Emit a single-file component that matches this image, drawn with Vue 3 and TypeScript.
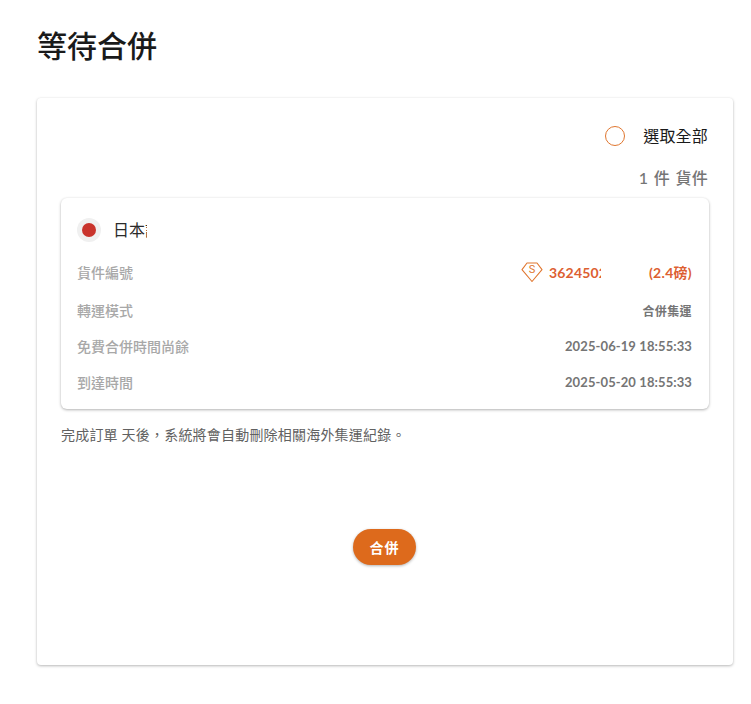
<script setup lang="ts">
const rows = [
  { label: '轉運模式', value: '合併集運', date: false },
  { label: '免費合併時間尚餘', value: '2025-06-19 18:55:33', date: true },
  { label: '到達時間', value: '2025-05-20 18:55:33', date: true },
]
</script>

<template>
  <div class="page">
    <h1 class="title">等待合併</h1>
    <section class="panel">
      <div class="select-all">
        <span class="radio"></span>
        <span class="select-label">選取全部</span>
      </div>
      <div class="count">1 件 貨件</div>
      <div class="parcel">
        <div class="origin">
          <span class="flag"><span class="flag-dot"></span></span>
          <span class="origin-name">日本語</span>
        </div>
        <div class="row first-row">
          <span class="label">貨件編號</span>
          <span class="parcel-id">
            <svg class="badge" viewBox="0 0 22 22" width="22" height="22" fill="none">
              <path d="M6 2h10l5 6.6L11 20.5 1 8.6z" stroke="#e0762f" stroke-width="1.1" stroke-linejoin="round" />
              <text x="11" y="9.5" text-anchor="middle" class="badge-s">S</text>
            </svg>
            <span class="id-text">3624502</span>
            <span class="weight">(2.4磅)</span>
          </span>
        </div>
        <div v-for="row in rows" :key="row.label" class="row">
          <span class="label">{{ row.label }}</span>
          <span class="value" :class="{ date: row.date }">{{ row.value }}</span>
        </div>
      </div>
      <p class="note">完成訂單 天後，系統將會自動刪除相關海外集運紀錄。</p>
      <div class="actions">
        <button class="merge" type="button">合併</button>
      </div>
    </section>
  </div>
</template>

<style>
html,
body {
  background: #fff;
}
</style>

<style scoped>
.page {
  box-sizing: border-box;
  height: 704px;
  padding: 26px 18px 0 37px;
  font-family: Lato, "Noto Sans CJK TC", sans-serif;
  overflow: hidden;
}

.title {
  margin: 0 0 32px;
  height: 40px;
  font-size: 30px;
  line-height: 39px;
  font-weight: 500;
  color: #1a1a1a;
}

.panel {
  box-sizing: border-box;
  height: 567px;
  padding: 27px 25px 0 24px;
  background: #fff;
  border-radius: 4px;
  box-shadow: 0 1px 3px rgba(0, 0, 0, 0.28), 0 0 2px rgba(0, 0, 0, 0.04);
}

.select-all {
  display: flex;
  justify-content: flex-end;
  align-items: center;
  height: 22px;
}

.radio {
  box-sizing: border-box;
  width: 20px;
  height: 20px;
  border: 1px solid #e0762f;
  border-radius: 50%;
  margin-right: 18px;
}

.select-label {
  font-size: 16px;
  line-height: 22px;
  letter-spacing: 0.2px;
  color: #1a1a1a;
}

.count {
  margin-top: 21px;
  height: 20px;
  line-height: 20px;
  text-align: right;
  font-size: 16px;
  font-weight: 500;
  letter-spacing: 0.3px;
  word-spacing: 1px;
  color: #757575;
}

.parcel {
  box-sizing: border-box;
  height: 211px;
  margin: 10px -1px 0 0;
  padding: 20px 17px 0 16px;
  border-radius: 6px;
  box-shadow: 0 1px 3px rgba(0, 0, 0, 0.3), 0 0 2px rgba(0, 0, 0, 0.04);
}

.origin {
  display: flex;
  align-items: center;
  height: 24px;
  margin-bottom: 10px;
}

.flag {
  display: flex;
  align-items: center;
  justify-content: center;
  width: 24px;
  height: 24px;
  border-radius: 50%;
  background: #f0f0f0;
  margin-right: 12px;
}

.flag-dot {
  width: 14px;
  height: 14px;
  border-radius: 50%;
  background: #c9342c;
}

.origin-name {
  width: 34px;
  overflow: hidden;
  white-space: nowrap;
  font-size: 16px;
  line-height: 24px;
  color: #2a2a2a;
}

.row {
  display: flex;
  justify-content: space-between;
  align-items: center;
  height: 36px;
}

.first-row {
  height: 40px;
}

.label {
  font-size: 14px;
  font-weight: 500;
  color: #a8a8a8;
}

.value {
  font-size: 12px;
  font-weight: 700;
  letter-spacing: 0.4px;
  color: #757575;
}

.value.date {
  font-size: 13px;
  letter-spacing: 0.1px;
}

.parcel-id {
  display: flex;
  align-items: center;
  color: #dd5f32;
  font-size: 14px;
  font-weight: 700;
}

.badge {
  margin-right: 6px;
}

.badge-s {
  font-family: Roboto, sans-serif;
  font-size: 11px;
  font-weight: 400;
  fill: #e0762f;
  dominant-baseline: middle;
}

.id-text {
  width: 52px;
  overflow: hidden;
  white-space: nowrap;
  letter-spacing: 0.2px;
  margin-right: 48px;
}

.weight {
  letter-spacing: 0.3px;
}

.note {
  margin: 16px 0 0;
  font-size: 14px;
  line-height: 20px;
  letter-spacing: 0.2px;
  color: #616161;
}

.actions {
  display: flex;
  justify-content: center;
  margin-top: 84px;
}

.merge {
  width: 63px;
  height: 36px;
  padding: 0;
  border: none;
  border-radius: 18px;
  background: #dd6a1c;
  color: #fff;
  font-family: inherit;
  font-size: 14px;
  font-weight: 700;
  letter-spacing: 1px;
  box-shadow: 0 1px 3px rgba(0, 0, 0, 0.3);
}
</style>
